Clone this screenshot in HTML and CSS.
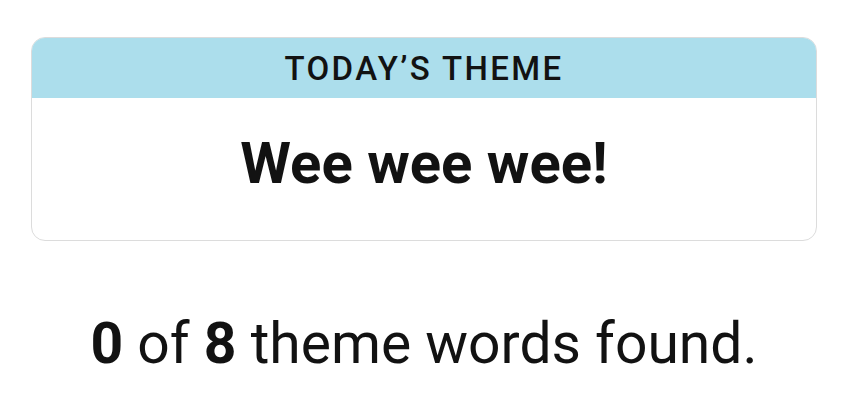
FILE: index.html
```html
<!DOCTYPE html>
<html lang="en">
<head>
<meta charset="utf-8">
<title>Today's Theme</title>
<link rel="stylesheet" href="styles.css">
</head>
<body>
<main class="page">
  <section class="theme-card">
    <header class="theme-header">TODAY’S THEME</header>
    <div class="theme-body">
      <h1 class="theme-title">Wee wee wee!</h1>
    </div>
  </section>
  <p class="progress"><strong>0</strong> of <strong>8</strong> theme words found.</p>
</main>
</body>
</html>
```
FILE: styles.css
```css
html, body {
  margin: 0;
  padding: 0;
  background: #ffffff;
}
body {
  font-family: Roboto, "Liberation Sans", Arial, sans-serif;
  color: #121212;
}
.page {
  width: 856px;
  height: 420px;
  box-sizing: border-box;
  padding: 37px 39px 0 31px;
  display: flex;
  flex-direction: column;
}
.theme-card {
  border: 1.5px solid #dcdcdc;
  border-radius: 14px;
  overflow: hidden;
  display: flex;
  flex-direction: column;
}
.theme-header {
  background: #acdeec;
  height: 60px;
  display: flex;
  align-items: center;
  justify-content: center;
  font-size: 33px;
  letter-spacing: 2.4px;
  font-weight: 500;
  color: #121212;
}
.theme-body {
  height: 142px;
  display: flex;
  align-items: center;
  justify-content: center;
}
.theme-title {
  margin: 0 0 12px 0;
  font-size: 58px;
  font-weight: 700;
  letter-spacing: 0;
}
.progress {
  margin: 74px 0 0 0;
  text-align: center;
  font-size: 57px;
  line-height: 1;
}
.progress strong {
  font-weight: 700;
}
```
